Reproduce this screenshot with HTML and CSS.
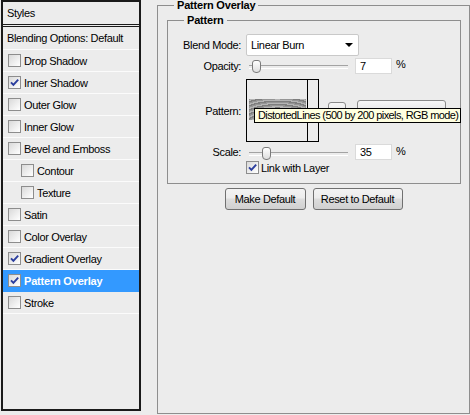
FILE: index.html
```html
<!DOCTYPE html>
<html>
<head>
<meta charset="utf-8">
<link rel="stylesheet" href="styles.css">
</head>
<body>
<div class="wrap">
  <div class="styles">
    <div class="hdr">Styles</div>
    <div class="item blend">Blending Options: Default</div>
    <div class="item"><span class="cb"></span>Drop Shadow</div>
    <div class="item"><span class="cb"><svg viewBox="0 0 11 11" width="11" height="11"><path d="M2 5.3 L4.4 7.8 L9.2 2.6" fill="none" stroke="#2b3e9e" stroke-width="1.9"/></svg></span>Inner Shadow</div>
    <div class="item"><span class="cb"></span>Outer Glow</div>
    <div class="item"><span class="cb"></span>Inner Glow</div>
    <div class="item"><span class="cb"></span>Bevel and Emboss</div>
    <div class="item sub"><span class="cb"></span>Contour</div>
    <div class="item sub"><span class="cb"></span>Texture</div>
    <div class="item"><span class="cb"></span>Satin</div>
    <div class="item"><span class="cb"></span>Color Overlay</div>
    <div class="item"><span class="cb"><svg viewBox="0 0 11 11" width="11" height="11"><path d="M2 5.3 L4.4 7.8 L9.2 2.6" fill="none" stroke="#2b3e9e" stroke-width="1.9"/></svg></span>Gradient Overlay</div>
    <div class="item sel"><span class="cb"><svg viewBox="0 0 11 11" width="11" height="11"><path d="M2 5.3 L4.4 7.8 L9.2 2.6" fill="none" stroke="#2b3e9e" stroke-width="1.9"/></svg></span>Pattern Overlay</div>
    <div class="item"><span class="cb"></span>Stroke</div>
  </div>

  <fieldset class="outer">
    <legend>Pattern Overlay</legend>
    <fieldset class="inner">
      <legend>Pattern</legend>
      <div class="frow r-blend">
        <span class="lbl">Blend Mode:</span>
        <div class="select"><span>Linear Burn</span><span class="arrow"></span></div>
      </div>
      <div class="frow r-opacity">
        <span class="lbl">Opacity:</span>
        <div class="slider"><span class="thumb" style="left:3px"></span></div>
        <div class="num">7</div>
        <span class="pct">%</span>
      </div>
      <div class="frow r-pattern">
        <span class="lbl">Pattern:</span>
        <div class="picker">
          <div class="pv"><div class="swatch"></div></div>
          <div class="pa"></div>
        </div>
        <div class="sqbtn"></div>
        <div class="snapbtn"></div>
        <div class="tip">DistortedLines (500 by 200 pixels, RGB mode)</div>
      </div>
      <div class="frow r-scale">
        <span class="lbl">Scale:</span>
        <div class="slider"><span class="thumb" style="left:13px"></span></div>
        <div class="num">35</div>
        <span class="pct">%</span>
      </div>
      <div class="frow r-link">
        <span class="cb"><svg viewBox="0 0 11 11" width="11" height="11"><path d="M2 5.3 L4.4 7.8 L9.2 2.6" fill="none" stroke="#2b3e9e" stroke-width="1.9"/></svg></span>
        <span>Link with Layer</span>
      </div>
    </fieldset>
    <div class="btns">
      <button class="btn b1">Make Default</button>
      <button class="btn b2">Reset to Default</button>
    </div>
  </fieldset>
</div>
</body>
</html>
```

FILE: styles.css
```css
* { box-sizing: border-box; }

body {
  margin: 0;
  background: #ececec;
  font-family: "Liberation Sans", Arial, sans-serif;
  font-size: 11px;
  letter-spacing: -0.35px;
  color: #000;
  width: 470px;
  height: 415px;
  overflow: hidden;
}

.wrap {
  display: flex;
  align-items: flex-start;
  padding-left: 1px;
}

/* Styles list */
.styles {
  width: 140px;
  height: 411px;
  border: 2px solid #1a1a1a;
  display: flex;
  flex-direction: column;
  flex: none;
}

.hdr {
  height: 25px;
  line-height: 22px;
  padding-left: 4px;
  border-bottom: 3px double #1a1a1a;
}

.item {
  height: 22px;
  display: flex;
  align-items: center;
  padding-left: 5px;
  border-bottom: 1px solid #fbfbfb;
  white-space: nowrap;
}

.item.blend {
  height: 23px;
  padding-left: 4px;
}

.item.sub { padding-left: 18px; }

.item.sel {
  background: #3399ff;
  color: #fff;
  font-weight: bold;
  letter-spacing: -0.2px;
  border-bottom-color: #3399ff;
}

.cb {
  width: 13px;
  height: 13px;
  flex: none;
  border: 1px solid #8d8d8d;
  background: linear-gradient(135deg, #d9d9d9, #f4f4f4 70%, #fff);
  margin-right: 3px;
  display: flex;
  align-items: center;
  justify-content: center;
}

.cb svg { display: block; }

/* Right side groups */
.outer {
  margin: 0 0 0 16px;
  padding: 0;
  border: 1px solid #8e8e8e;
  width: 313px;
  height: 414px;
  min-width: 0;
  flex: none;
}

.outer > legend,
.inner > legend {
  font-weight: bold;
  letter-spacing: -0.2px;
  line-height: 11px;
  padding: 0 3px;
  margin-left: 16px;
}

.inner {
  margin: 4px 0 0 9px;
  padding: 0 0 9px 0;
  width: 294px;
  border: 1px solid #8e8e8e;
  min-width: 0;
}

.frow {
  display: flex;
  align-items: center;
}

.lbl {
  width: 73px;
  text-align: right;
  margin-right: 5px;
  flex: none;
}

.r-blend { margin-top: 8px; height: 22px; }
.r-opacity { margin-top: 1px; height: 17px; }
.r-pattern { margin-top: 5px; height: 63px; position: relative; }
.r-scale { margin-top: 2px; height: 16px; }
.r-link { margin-top: 1px; height: 13px; padding-left: 78px; }
.r-link .cb { margin-right: 2px; }

.select {
  width: 113px;
  height: 22px;
  background: #fff;
  border: 1px solid #c9c9c9;
  border-radius: 2px;
  display: flex;
  align-items: center;
  justify-content: space-between;
  padding: 0 4px 0 4px;
}

.arrow {
  width: 0;
  height: 0;
  border-left: 4px solid transparent;
  border-right: 4px solid transparent;
  border-top: 4px solid #000;
  margin-right: 1px;
}

.slider {
  position: relative;
  width: 99px;
  height: 17px;
  margin-left: 3px;
  flex: none;
}

.slider::before {
  content: "";
  position: absolute;
  left: 0;
  right: 0;
  top: 8px;
  height: 2px;
  border-top: 1px solid #a3a3a3;
  border-bottom: 1px solid #fff;
}

.thumb {
  position: absolute;
  top: 3px;
  width: 9px;
  height: 13px;
  border: 1px solid #7b7b7b;
  border-radius: 3px 3px 4px 4px;
  background: linear-gradient(#fff, #dedede);
}

.num {
  width: 37px;
  height: 16px;
  margin-left: 7px;
  background: #fff;
  border: 1px solid #dadada;
  padding-left: 4px;
  line-height: 14px;
  flex: none;
}

.pct {
  margin-left: 4px;
  margin-bottom: 3px;
}

.picker {
  width: 73px;
  height: 63px;
  border: 1px solid #000;
  display: flex;
  flex: none;
}

.pv {
  width: 61px;
  border-right: 1px solid #000;
  display: flex;
  align-items: center;
  padding-left: 2px;
  padding-bottom: 3px;
}

.swatch {
  width: 57px;
  height: 21px;
  background:
    repeating-radial-gradient(ellipse 70px 40px at 50% 160%, #7e7e7e 0 2px, #b4b4b4 2px 4px, #959595 4px 6px);
}

.pa { flex: 1; }

.sqbtn {
  width: 18px;
  height: 18px;
  margin-left: 9px;
  border: 1px solid #8a8a8a;
  border-radius: 3px;
  background: linear-gradient(#f7f7f7, #dcdcdc);
  flex: none;
}

.snapbtn {
  width: 89px;
  height: 22px;
  margin-left: 11px;
  border: 1px solid #8a8a8a;
  border-radius: 3px;
  background: linear-gradient(#f7f7f7, #e6e6e6 50%, #dadada);
  flex: none;
}

.tip {
  position: absolute;
  left: 86px;
  top: 29px;
  width: 207px;
  height: 15px;
  background: #ffffe1;
  border: 1px solid #000;
  padding-left: 3px;
  line-height: 13px;
  letter-spacing: -0.6px;
  white-space: nowrap;
}

.btns {
  display: flex;
  justify-content: center;
  gap: 7px;
  margin-top: 4px;
}

.btn {
  height: 22px;
  padding: 0;
  border: 1px solid #707070;
  border-radius: 3px;
  background: linear-gradient(#f3f3f3, #ececec 45%, #dddddd 50%, #d0d0d0);
  font-family: inherit;
  font-size: 11px;
  letter-spacing: -0.35px;
  color: #000;
}

.b1 { width: 81px; }
.b2 { width: 90px; }
```
